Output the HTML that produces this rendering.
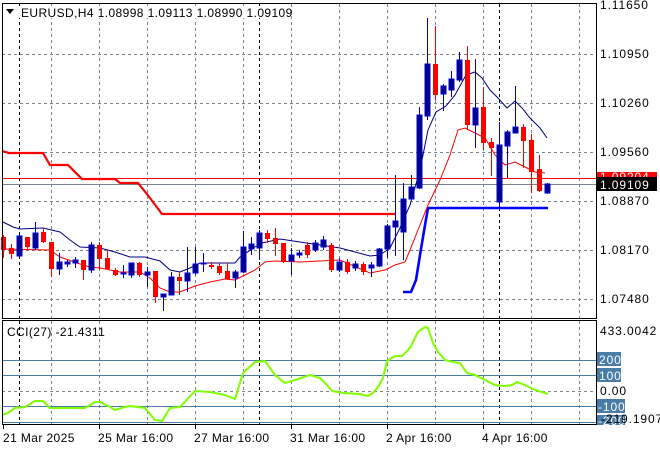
<!DOCTYPE html>
<html><head><meta charset="utf-8"><style>
html,body{margin:0;padding:0;background:#fff;}
svg{display:block;font-family:"Liberation Sans",Tahoma,sans-serif;}
</style></head><body>
<svg id="s" width="660" height="450" xmlns="http://www.w3.org/2000/svg">
<rect width="660" height="450" fill="#fff"/>
<g id="grid" stroke="#7a8590" stroke-dasharray="3,3" stroke-width="1">
<line x1="2" y1="54.5" x2="596" y2="54.5"/><line x1="2" y1="103.5" x2="596" y2="103.5"/><line x1="2" y1="152.5" x2="596" y2="152.5"/><line x1="2" y1="201.5" x2="596" y2="201.5"/><line x1="2" y1="250.5" x2="596" y2="250.5"/><line x1="2" y1="299.5" x2="596" y2="299.5"/>
<line x1="2" y1="391.5" x2="596" y2="391.5"/>
</g>
<g id="vg"></g>
<g stroke="#4a7ca8" stroke-width="1">
<line x1="2" y1="360.5" x2="596" y2="360.5"/><line x1="2" y1="375.5" x2="596" y2="375.5"/><line x1="2" y1="406.5" x2="596" y2="406.5"/><line x1="2" y1="422.5" x2="596" y2="422.5"/>
</g>
<line x1="2" y1="178.5" x2="596" y2="178.5" stroke="#ff0000"/>
<line x1="2" y1="184.5" x2="596" y2="184.5" stroke="#7a8590"/>
<polyline fill="none" stroke="#ff0000" stroke-width="2.2" points="2,151 9,153 43,153 50,165 68,165 82,179 115,179 120,183 138,183 150,198 162,214 395,214"/>
<polyline fill="none" stroke="#0000ff" stroke-width="2.6" points="403,292 411,292 416,280 420,255 425,225 428,208 548,208"/>
<polyline fill="none" stroke="#000080" stroke-width="1" points="3,222 13,227 20,229 43,228 60,232 70,240 80,247 100,248 115,252 130,257 145,257 160,261 170,270 180,272 190,268 200,263 235,263 240,257 255,247 262,243 280,239 300,242 340,248 370,256 380,255 390,248 400,228 410,205 420,170 428,130 436,112 446,106 455,95 466,75 475,72 482,78 490,90 498,98 507,108 515,101 522,108 530,118 540,128 547,138"/>
<polyline fill="none" stroke="#ff0000" stroke-width="1" points="3,249 50,250 60,257 80,264 90,267 100,268 120,272 140,272 150,278 160,288 170,292 180,292 195,286 210,282 225,279 235,280 245,275 255,270 265,262 275,261 300,262 340,260 370,273 385,270 395,265 405,262 410,250 418,230 428,205 440,180 450,155 458,130 465,128 475,133 485,138 495,155 505,165 515,162 525,167 535,172 545,173"/>
<g id="c"></g>
<polyline fill="none" stroke="#7fff00" stroke-width="2" points="2,415 8,413 15,408 25,407 35,401 43,401 50,408 60,408 85,408 95,402 100,402 110,407 115,410 125,407 130,406 145,408 155,420 162,421 170,408 180,407 195,391 210,392 225,395 235,399 243,373 255,362 265,361 275,375 285,383 295,380 310,375 320,378 327,385 332,391 343,393 360,394 368,396 373,393 378,387 383,378 387,361 395,356 402,356 410,348 418,332 425,327 428,328 433,343 438,352 445,360 453,362 460,363 467,373 475,375 485,380 495,385 505,386 512,385 517,382 525,385 535,390 545,393 548,394"/>
<rect x="2.5" y="3.5" width="594" height="315" fill="none" stroke="#000"/>
<rect x="2.5" y="320.5" width="594" height="104" fill="none" stroke="#000"/>
<g id="ticks" stroke="#000"></g>
<g font-size="12" fill="#000">
<g letter-spacing="0.9">
<text x="600" y="9">1.11650</text><text x="600" y="58">1.10950</text><text x="600" y="107">1.10260</text><text x="600" y="156">1.09560</text><text x="600" y="205">1.08870</text><text x="600" y="254">1.08170</text><text x="600" y="303">1.07480</text>
<rect x="597" y="172" width="60" height="10" fill="#ff0000"/>
<text x="600" y="181" fill="#fff">1.09204</text>
<rect x="597" y="177" width="60" height="14" fill="#000"/>
<text x="600" y="189" fill="#fff">1.09109</text>
<text x="600" y="335">433.0042</text>
<rect x="597" y="352" width="24" height="14" fill="#4a7ca8"/><text x="599" y="364" fill="#fff">200</text>
<rect x="597" y="368" width="24" height="14" fill="#4a7ca8"/><text x="599" y="380" fill="#fff">100</text>
<text x="600" y="395">0.00</text>
<rect x="597" y="399" width="28" height="14" fill="#4a7ca8"/><text x="598" y="411" fill="#fff">-100</text>
<rect x="597" y="415" width="28" height="10" fill="#4a7ca8"/><text x="598" y="425" fill="#fff">-200</text>
<text x="601" y="423">-219.1907</text>
</g>
<g letter-spacing="0.4">
<text x="3" y="442">21 Mar 2025</text><text x="98" y="442">25 Mar 16:00</text><text x="194" y="442">27 Mar 16:00</text><text x="290" y="442">31 Mar 16:00</text><text x="386" y="442">2 Apr 16:00</text><text x="482" y="442">4 Apr 16:00</text>
<rect x="17" y="6" width="272" height="12" fill="#fff"/>
<text x="21" y="17">EURUSD,H4  1.08998 1.09113 1.08990 1.09109</text>
<text x="7" y="336">CCI(27) -21.4311</text>
</g>
</g>
<polygon points="6,9 14,9 10,14" fill="#000"/>
<script>
var vg=document.getElementById('vg'),NS='http://www.w3.org/2000/svg';
function L(p,x1,y1,x2,y2,st,da){var l=document.createElementNS(NS,'line');l.setAttribute('x1',x1);l.setAttribute('y1',y1);l.setAttribute('x2',x2);l.setAttribute('y2',y2);l.setAttribute('stroke',st);if(da)l.setAttribute('stroke-dasharray',da);p.appendChild(l);}
[51,99,147,195,243,291,339,387,435,483,531,579].forEach(function(x){L(vg,x+.5,4,x+.5,318,'#7a8590','3,3');L(vg,x+.5,321,x+.5,424,'#7a8590','3,3');});
[19,259,499].forEach(function(x){L(vg,x+.5,4,x+.5,318,'#000','3,3');L(vg,x+.5,321,x+.5,424,'#000','3,3');});
var tk=document.getElementById('ticks');[3,99,195,291,387,483].forEach(function(x){L(tk,x+.5,424,x+.5,429,'#000');});
var d=[[0,237,250,235,258],[0,248,254,244,259],[1,236,256,235,257],[0,237,247,237,251],[1,233,248,222,250],[0,232,242,228,243],[0,242,269,242,277],[1,262,269,253,275],[1,262,264,260,267],[1,260,263,257,268],[0,260,270,260,280],[1,245,270,242,273],[0,245,259,242,270],[0,258,269,250,270],[0,270,275,268,276],[1,273,274,265,278],[1,263,275,263,278],[0,263,275,262,277],[1,272,275,267,287],[0,271,297,271,303],[1,294,297,294,311],[1,277,295,272,295],[0,277,281,272,295],[1,273,281,247,292],[1,264,273,247,275],[1,263,264,253,272],[0,265,267,262,269],[0,266,273,263,275],[0,271,279,263,280],[1,272,278,270,288],[1,247,272,231,273],[1,244,249,237,255],[1,233,248,230,260],[0,233,239,230,243],[0,238,244,228,256],[0,243,262,243,263],[1,255,261,248,275],[1,253,255,250,258],[0,245,255,242,258],[1,243,250,240,252],[1,240,247,236,250],[0,245,270,243,272],[1,262,270,258,272],[0,262,272,259,274],[1,264,268,261,271],[0,264,272,262,275],[1,265,268,262,277],[1,249,266,248,267],[1,226,249,224,258],[1,221,227,175,256],[1,199,232,183,260],[1,187,199,175,200],[1,115,188,107,189],[1,64,116,18,120],[0,64,95,26,100],[1,86,94,84,111],[1,79,90,71,97],[1,60,80,52,82],[0,60,125,46,130],[1,108,125,59,148],[0,107,143,87,150],[0,142,148,138,176],[1,145,202,122,207],[1,132,146,130,178],[1,127,133,86,133],[0,127,141,124,168],[0,140,172,134,193],[0,169,191,155,192],[1,184,193,183,194]];
var g=document.getElementById('c');
d.forEach(function(c,i){var x=3+8*i,col=c[0]?'#0000cd':'#ff0000';L(g,x+.5,c[3],x+.5,c[4],col);var r=document.createElementNS(NS,'rect');r.setAttribute('x',x-2);r.setAttribute('y',c[1]);r.setAttribute('width',5);r.setAttribute('height',Math.max(1,c[2]-c[1]));r.setAttribute('fill',c[0]?'#00008b':'#ff0000');if(c[0]){r.setAttribute('stroke','#0000cd');r.setAttribute('stroke-width','1');}g.appendChild(r);});
</script>
</svg>
</body></html>
